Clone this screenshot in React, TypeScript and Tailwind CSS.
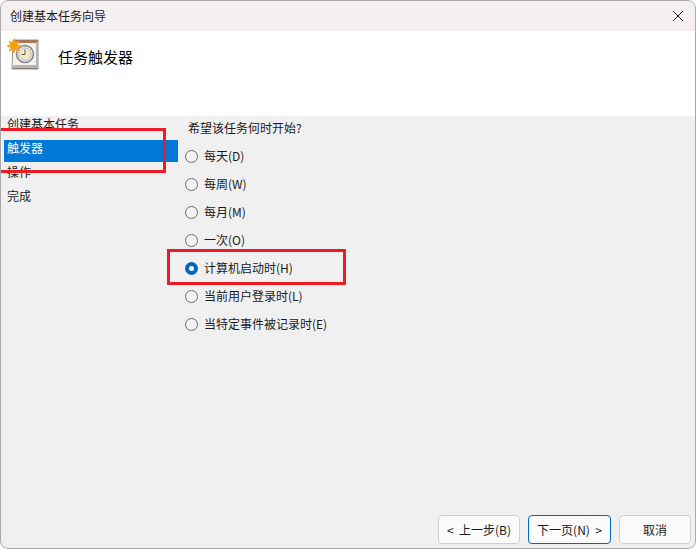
const font = { fontFamily: '"Noto Sans CJK SC", "Liberation Sans", sans-serif' };

const options = ["每天(D)", "每周(W)", "每月(M)", "一次(O)", "计算机启动时(H)", "当前用户登录时(L)", "当特定事件被记录时(E)"];
const steps = ["创建基本任务", "触发器", "操作", "完成"];

function Radio({ on }: { on: boolean }) {
  return on ? (
    <span className="flex h-[13px] w-[13px] shrink-0 items-center justify-center rounded-full bg-[#0067c0]">
      <span className="h-[5px] w-[5px] rounded-full bg-white" />
    </span>
  ) : (
    <span className="h-[13px] w-[13px] shrink-0 rounded-full border border-[#6b6b6b] bg-[#f3f3f3]" />
  );
}

function TaskIcon() {
  return (
    <svg width="32" height="34" viewBox="0 0 32 34" className="shrink-0">
      <path d="M6 2H31V31H5z" fill="#f6f2e8" stroke="#98948e" />
      <rect x="8" y="2" width="23" height="3" fill="#a8775a" />
      <path d="M5 29L7 27H29V4H31V31H5z" fill="#b5b5b5" />
      <rect x="5" y="30" width="26" height="1" fill="#808080" />
      <circle cx="18" cy="16" r="8.500" fill="#dfe3e8" stroke="#85888c" strokeWidth="1.500" />
      <circle cx="18" cy="16" r="6" fill="#f8e9c6" stroke="#9fa3a8" strokeWidth="0.500" />
      <path d="M18 11.500V16.500H14.500" fill="none" stroke="#5a5a5a" strokeWidth="1" />
      <g fill="#f6a10f">
        <circle cx="7" cy="8" r="4.500" />
        <path d="M7 0l1.400 3.500h-2.800zM7 16l-1.400-3.500h2.800zM-1 8l3.500-1.400v2.800zM15 8l-3.500 1.400V6.600zM1.400 2.400l3.400 1.500-1.900 1.900zM12.600 13.600l-3.400-1.500 1.900-1.900zM12.600 2.400l-1.500 3.400-1.900-1.900zM1.400 13.600l1.500-3.400 1.900 1.900z" />
      </g>
    </svg>
  );
}

export default function App() {
  return (
    <div className="relative flex h-[549px] w-[696px] flex-col overflow-hidden rounded-lg border border-[#a9a9a9] bg-[#f0f0f0] text-[12px] text-[#1a1a1a]" style={font}>
      <div className="flex h-[30px] shrink-0 items-center justify-between bg-[#f6efef] pl-[9px] pr-[10px]">
        <span className="leading-none">创建基本任务向导</span>
        <svg width="12" height="12" viewBox="0 0 12 12" className="mr-[1px]">
          <path d="M1 1l10 10M11 1L1 11" stroke="#1a1a1a" strokeWidth="1" fill="none" />
        </svg>
      </div>

      <div className="flex h-[85px] shrink-0 items-start bg-white pl-[6px] pt-[7px]">
        <TaskIcon />
        <span className="ml-[19px] mt-[9px] text-[15px] leading-[20px] text-black">任务触发器</span>
      </div>

      <div className="flex min-h-0 flex-1">
        <div className="flex w-[177px] shrink-0 flex-col pl-[3px]">
          {steps.map((s, i) => (
            <div key={s} className="h-[24px]">
              <div className={`h-[22px] pl-[3px] leading-[16px] ${i === 1 ? "bg-[#0078d7] text-white" : ""}`}>{s}</div>
            </div>
          ))}
        </div>
        <div className="flex flex-col pl-[7px] pt-[3px]">
          <div className="ml-[3px] flex h-[17px] items-center">希望该任务何时开始?</div>
          <div className="mt-[11px] flex flex-col gap-[10px]">
            {options.map((o, i) => (
              <div key={o} className="flex h-[18px] items-center gap-[6px]">
                <Radio on={i === 4} />
                <span>{o}</span>
              </div>
            ))}
          </div>
        </div>
      </div>

      <div className="flex shrink-0 justify-end gap-[8px] pb-[4px] pr-[4px]">
        <button className="h-[29px] w-[82px] whitespace-pre rounded-[4px] border border-[#d0d0d0] bg-[#fbfbfb]">{"<  上一步(B)"}</button>
        <button className="h-[29px] w-[83px] whitespace-pre rounded-[4px] border border-[#0067c0] bg-[#fbfbfb]">{"下一页(N)  >"}</button>
        <button className="h-[29px] w-[72px] rounded-[4px] border border-[#d0d0d0] bg-[#fbfbfb]">取消</button>
      </div>

      <div className="pointer-events-none absolute left-[-1px] top-[127px] h-[45px] w-[166px] border-[3px] border-l-0 border-[#ed1c24]" />
      <div className="pointer-events-none absolute left-[166px] top-[248px] h-[36px] w-[179px] border-[3px] border-[#ed1c24]" />
    </div>
  );
}
